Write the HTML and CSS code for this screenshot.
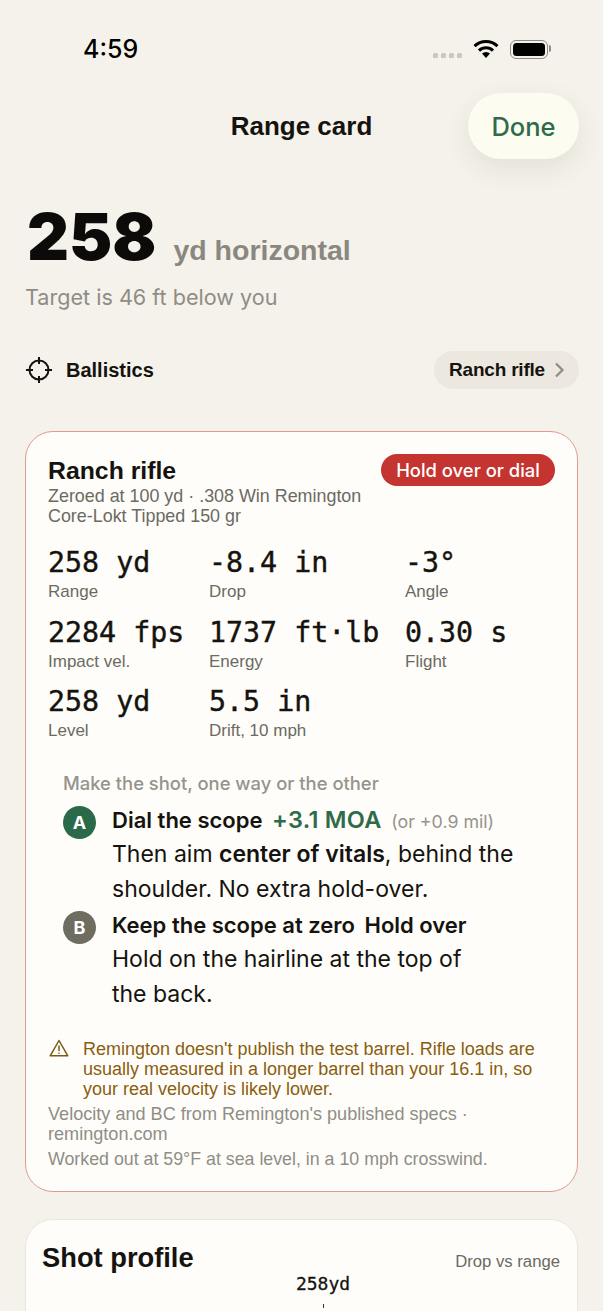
FILE: index.html
```html
<!DOCTYPE html>
<html lang="en">
<head>
    <meta charset="UTF-8">
    <title>Range card</title>
    <link rel="stylesheet" href="styles.css">
</head>
<body>
<div class="screen">
    <div class="status">
        <span class="time">4:59</span>
        <div class="status_icons">
            <span class="dots"><i></i><i></i><i></i><i></i></span>
            <svg class="wifi" width="26" height="20" viewBox="0 0 26 20">
                <path d="M1.5 7.2a16.5 16.5 0 0 1 23 0" fill="none" stroke="#000" stroke-width="3"/>
                <path d="M6 11.6a10 10 0 0 1 14 0" fill="none" stroke="#000" stroke-width="3"/>
                <path d="M9 14.6 13 19l4-4.4a5.6 5.6 0 0 0-8 0z" fill="#000"/>
            </svg>
            <span class="battery"><b></b></span>
        </div>
    </div>

    <div class="nav">
        <h1>Range card</h1>
        <button class="done">Done</button>
    </div>

    <div class="hero">
        <div class="hero_main"><span class="big">258</span><span class="unit">yd horizontal</span></div>
        <p class="hero_sub">Target is 46 ft below you</p>
    </div>

    <div class="ballistics">
        <div class="ballistics_left">
            <svg width="26" height="26" viewBox="0 0 26 26" fill="none" stroke="#15130f" stroke-width="2">
                <circle cx="13" cy="13" r="9.5"/>
                <path d="M13 0v7M13 19v7M0 13h7M19 13h7"/>
            </svg>
            <span>Ballistics</span>
        </div>
        <div class="pill"><span>Ranch rifle</span>
            <svg width="11" height="16" viewBox="0 0 11 16" fill="none" stroke="#8f8c85" stroke-width="2.2"><path d="M2 1.5 8.5 8 2 14.5"/></svg>
        </div>
    </div>

    <div class="card card_main">
        <div class="card_head">
            <div>
                <h2>Ranch rifle</h2>
                <p class="sub">Zeroed at 100 yd · .308 Win Remington<br>Core-Lokt Tipped 150 gr</p>
            </div>
            <span class="badge">Hold over or dial</span>
        </div>

        <div class="stats">
            <div><div class="val">258 yd</div><div class="lbl">Range</div></div>
            <div><div class="val">-8.4 in</div><div class="lbl">Drop</div></div>
            <div><div class="val">-3°</div><div class="lbl">Angle</div></div>
            <div><div class="val">2284 fps</div><div class="lbl">Impact vel.</div></div>
            <div><div class="val">1737 ft·lb</div><div class="lbl">Energy</div></div>
            <div><div class="val">0.30 s</div><div class="lbl">Flight</div></div>
            <div><div class="val">258 yd</div><div class="lbl">Level</div></div>
            <div><div class="val">5.5 in</div><div class="lbl">Drift, 10 mph</div></div>
        </div>

        <div class="shot">
            <p class="shot_title">Make the shot, one way or the other</p>
            <div class="option">
                <span class="letter letter_a">A</span>
                <div class="option_text">
                    <div class="option_head">Dial the scope <em>+3.1 MOA</em> <small>(or +0.9 mil)</small></div>
                    <p>Then aim <strong>center of vitals</strong>, behind the shoulder. No extra hold-over.</p>
                </div>
            </div>
            <div class="option">
                <span class="letter letter_b">B</span>
                <div class="option_text">
                    <div class="option_head">Keep the scope at zero <span class="hold">Hold over</span></div>
                    <p>Hold on the hairline at the top of<br>the back.</p>
                </div>
            </div>
        </div>

        <div class="warn">
            <svg width="20" height="18" viewBox="0 0 20 18" fill="none" stroke="#7a5a12" stroke-width="1.5" stroke-linejoin="round">
                <path d="M10 1.5 1.2 16.8h17.6z"/>
                <path d="M10 6.5v5.5M10 13.6v1.2"/>
            </svg>
            <p>Remington doesn't publish the test barrel. Rifle loads are usually measured in a longer barrel than your 16.1 in, so your real velocity is likely lower.</p>
        </div>
        <p class="note">Velocity and BC from Remington's published specs · remington.com</p>
        <p class="note note_last">Worked out at 59°F at sea level, in a 10 mph crosswind.</p>
    </div>

    <div class="card card_profile">
        <div class="profile_head">
            <h3>Shot profile</h3>
            <span>Drop vs range</span>
        </div>
        <div class="profile_mark">258yd</div>
        <div class="profile_tick"></div>
    </div>
</div>
</body>
</html>
```

FILE: styles.css
```css
*{margin: 0;padding: 0;box-sizing: border-box;}
body{
    background-color: #f5f2eb;
    font-family: "Liberation Sans", Arial, sans-serif;
    color: #15130f;
}
.screen{
    width: 603px;
    height: 1311px;
    overflow: hidden;
}

/* status bar */
.status{
    height: 93px;
    padding: 32px 55px 0 83px;
    display: flex;
    justify-content: space-between;
    align-items: flex-start;
}
.time{
    font-family: Inter, sans-serif;
    font-size: 25px;
    font-weight: 500;
    line-height: 34px;
    color: #000;
}
.status_icons{
    display: flex;
    align-items: center;
    gap: 11px;
    height: 34px;
}
.dots{
    display: flex;
    gap: 3px;
    margin-top: 12px;
}
.dots i{
    width: 5px;
    height: 5px;
    border-radius: 1.5px;
    background-color: #c9c7bf;
}
.battery{
    position: relative;
    width: 38px;
    height: 19px;
    border: 1.5px solid #8b8a85;
    border-radius: 6px;
    padding: 2px;
    display: block;
}
.battery b{
    display: block;
    height: 100%;
    background-color: #000;
    border-radius: 3.5px;
}
.battery:after{
    content: "";
    position: absolute;
    right: -4px;
    top: 4.5px;
    width: 2px;
    height: 7px;
    background-color: #8b8a85;
    border-radius: 0 2px 2px 0;
}

/* nav */
.nav{
    height: 66px;
    padding: 0 24px 0 0;
    display: flex;
    justify-content: flex-end;
    position: relative;
    align-items: center;
}
.nav h1{
    position: absolute;
    left: 0;
    width: 100%;
    text-align: center;
    font-size: 26px;
    font-weight: 700;
}
.done{
    position: relative;
    width: 111px;
    height: 66px;
    border: none;
    border-radius: 33px;
    background-color: #fdfcf0;
    color: #2f6b4a;
    font-family: Inter, sans-serif;
    font-size: 25.5px;
    font-weight: 500;
    box-shadow: 0 10px 28px rgba(60, 50, 30, 0.09);
}

/* hero */
.hero{
    padding: 41px 25px 0;
}
.hero_main{
    display: flex;
    align-items: baseline;
    gap: 17px;
    height: 74px;
    padding-left: 2px;
}
.big{
    font-family: Inter, sans-serif;
    font-size: 65px;
    font-weight: 900;
    line-height: 74px;
    color: #0c0b09;
}
.unit{
    font-size: 28.5px;
    font-weight: 700;
    color: #8a8780;
}
.hero_sub{
    margin-top: 9px;
    font-family: Inter, sans-serif;
    font-size: 21.6px;
    line-height: 28px;
    color: #8f8c85;
}

/* ballistics row */
.ballistics{
    margin-top: 40px;
    padding: 0 24px 0 26px;
    height: 38px;
    display: flex;
    justify-content: space-between;
    align-items: center;
}
.ballistics_left{
    display: flex;
    align-items: center;
    gap: 14px;
    font-size: 20px;
    font-weight: 700;
}
.pill{
    width: 145px;
    height: 38px;
    padding: 0 14px 0 15px;
    border-radius: 19px;
    background-color: #ece8df;
    display: flex;
    justify-content: space-between;
    align-items: center;
    font-size: 19px;
    font-weight: 700;
    letter-spacing: -0.2px;
    white-space: nowrap;
}

/* cards */
.card{
    margin: 42px 25px 0;
    background-color: #fefdf9;
    border-radius: 28px;
}
.card_main{
    height: 761px;
    padding: 23px 22px 0;
    border: 1.5px solid #e09a92;
}
.card_head{
    display: flex;
    justify-content: space-between;
    align-items: flex-start;
}
h2{
    font-size: 24.8px;
    font-weight: 700;
    line-height: 31px;
}
.sub{
    font-size: 17.9px;
    line-height: 20px;
    color: #6b6a62;
}
.badge{
    width: 174px;
    height: 32px;
    margin-top: -1px;
    border-radius: 16px;
    background-color: #c43430;
    color: #fff;
    font-family: Inter, sans-serif;
    font-size: 18.4px;
    font-weight: 500;
    line-height: 32px;
    text-align: center;
}

.stats{
    margin-top: 19px;
    display: grid;
    grid-template-columns: 161px 196px 1fr;
    row-gap: 12.5px;
}
.val{
    font-family: "DejaVu Sans Mono", monospace;
    font-size: 28.3px;
    line-height: 36px;
    color: #15130f;
    -webkit-text-stroke: 0.4px #15130f;
}
.lbl{
    font-size: 17px;
    line-height: 20px;
    margin-top: 1px;
    color: #6b6a62;
}

.shot{
    margin-top: 31px;
    padding-left: 15px;
}
.shot_title{
    font-family: Inter, sans-serif;
    font-size: 18.4px;
    font-weight: 500;
    line-height: 22px;
    color: #96938c;
}
.option{
    margin-top: 4px;
    display: flex;
    gap: 16px;
}
.shot_title + .option{
    margin-top: 12px;
}
.letter{
    flex: none;
    width: 33px;
    height: 33px;
    border-radius: 50%;
    color: #fff;
    font-family: Inter, sans-serif;
    font-size: 18px;
    font-weight: 700;
    line-height: 33px;
    text-align: center;
}
.letter_a{
    background-color: #2a6a49;
}
.letter_b{
    background-color: #6f6c60;
}
.option_text{
    font-family: Inter, sans-serif;
    width: 412px;
}
.option_head{
    height: 28px;
    font-size: 22px;
    font-weight: 600;
    line-height: 28px;
    white-space: nowrap;
}
.option_head em{
    font-style: normal;
    margin-left: 4px;
    font-size: 23.5px;
    letter-spacing: 0.3px;
    color: #2f6b4a;
}
.option_head small{
    margin-left: 4px;
    font-size: 17.8px;
    font-weight: 400;
    color: #96938c;
}
.hold{
    margin-left: 4px;
}
.option_text p{
    margin-top: 3px;
    font-size: 23px;
    line-height: 35px;
}
.option_text strong{
    font-weight: 600;
}

.warn{
    margin-top: 27px;
    display: flex;
    gap: 14px;
    color: #8a5d10;
    font-size: 18px;
    line-height: 20px;
}
.warn svg{
    flex: none;
    margin: 0 0 0 1px;
}
.note{
    margin-top: 5px;
    font-size: 18.1px;
    line-height: 20px;
    color: #8f8e86;
}
.note_last{
    margin-top: 5px;
    font-size: 17.8px;
}

.card_profile{
    margin-top: 27px;
    height: 200px;
    padding: 21px 17px 0 16px;
    border: 1px solid #ebe7de;
}
.profile_head{
    display: flex;
    justify-content: space-between;
    align-items: baseline;
}
h3{
    font-size: 27.3px;
    font-weight: 700;
    line-height: 34px;
}
.profile_head span{
    font-size: 16.7px;
    color: #6b6a62;
}
.profile_mark{
    margin: -2px 0 0 44px;
    text-align: center;
    font-family: "DejaVu Sans Mono", monospace;
    font-size: 18px;
    line-height: 22px;
    -webkit-text-stroke: 0.3px #15130f;
}
.profile_tick{
    margin: 9px 0 0 281px;
    width: 1px;
    height: 4px;
    background-color: #333;
}
```
